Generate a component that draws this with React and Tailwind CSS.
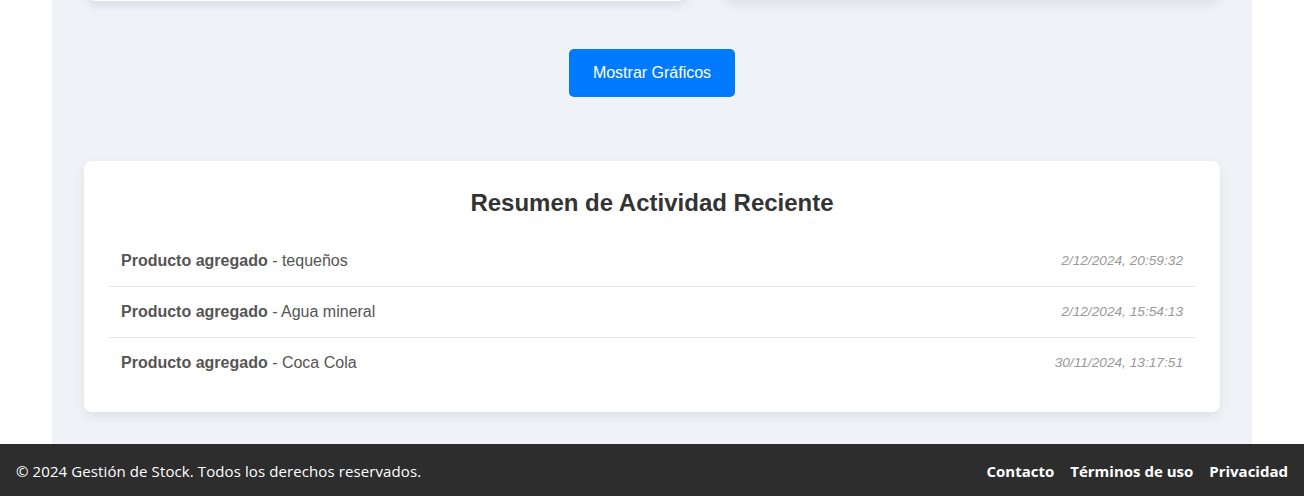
export default function App() {
  const rows = [
    { name: "tequeños", date: "2/12/2024, 20:59:32" },
    { name: "Agua mineral", date: "2/12/2024, 15:54:13" },
    { name: "Coca Cola", date: "30/11/2024, 13:17:51" },
  ];
  return (
    <div className="bg-white min-h-[496px] overflow-hidden" style={{ fontFamily: '"Liberation Sans", Arial, sans-serif' }}>
      <main className="w-[1200px] mx-auto bg-[#eff2f7] px-8 pb-[32px]">
        <div className="flex items-start -mt-[100px]">
          <div className="ml-[4px] w-[598px] h-[101px] bg-white rounded-lg shadow-[0_4px_12px_rgba(0,0,0,0.1)]"></div>
          <div className="ml-auto w-[496px] h-[100px] bg-white rounded-lg shadow-[0_4px_12px_rgba(0,0,0,0.08)]"></div>
        </div>
        <div className="mt-[48px] flex justify-center">
          <button className="h-12 px-6 bg-[#007bff] text-white text-base rounded-[5px]">
            Mostrar Gráficos
          </button>
        </div>
        <section className="mt-16 bg-white rounded-lg shadow-[0_4px_12px_rgba(0,0,0,0.08)] px-6 pt-6 pb-[24px]">
          <h2 className="text-center text-[24px] leading-[36px] font-bold text-[#333] mb-[15px]">
            Resumen de Actividad Reciente
          </h2>
          <ul>
            {rows.map((r, i) => (
              <li
                key={i}
                className={
                  "flex justify-between items-center px-[13px] h-[50px] " +
                  (i < rows.length - 1 ? "border-b border-[#e2e6ec] box-content" : "")
                }
              >
                <span className="text-base leading-[18px] text-[#555]">
                  <strong className="font-bold">Producto agregado</strong> - {r.name}
                </span>
                <span className="text-[13.7px] leading-[18px] italic text-[#999]">{r.date}</span>
              </li>
            ))}
          </ul>
        </section>
      </main>
      <footer
        className="bg-[#2d2d2d] text-white h-[52px] px-4 pt-[3px] flex items-center justify-between"
        style={{ fontFamily: '"Open Sans", "Noto Sans", sans-serif' }}
      >
        <span className="text-[15px] tracking-[0.1px]">© 2024 Gestión de Stock. Todos los derechos reservados.</span>
        <nav className="flex gap-4 font-bold text-[15px]">
          <a>Contacto</a>
          <a>Términos de uso</a>
          <a>Privacidad</a>
        </nav>
      </footer>
    </div>
  );
}
